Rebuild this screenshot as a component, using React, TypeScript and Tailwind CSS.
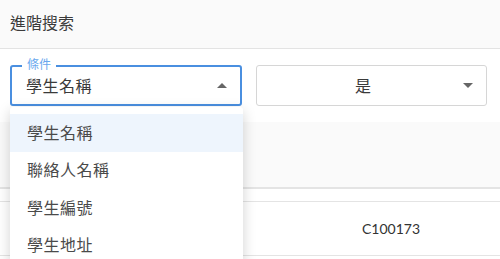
const menuItems = ["學生名稱", "聯絡人名稱", "學生編號", "學生地址"];

const font = "font-['Lato','Noto_Sans_CJK_TC',sans-serif]";

function Caret({ up = false }: { up?: boolean }) {
  return (
    <svg width="10" height="5" viewBox="0 0 10 5" className="shrink-0" aria-hidden="true">
      {up ? <path d="M0 5 L5 0 L10 5 Z" fill="#666" /> : <path d="M0 0 L5 5 L10 0 Z" fill="#666" />}
    </svg>
  );
}

export default function App() {
  return (
    <div className={`relative h-[259px] w-[500px] overflow-hidden bg-white ${font}`}>
      <div className="flex h-[49px] items-center border-b border-[#e3e3e3] bg-[#fafafa] px-[10px] pb-[2px] text-[16px] text-[#3a3a3a]">
        進階搜索
      </div>

      <div className="flex gap-[14px] px-[10px] pt-[16px]">
        <div className="relative flex h-[41px] w-[232px] items-center rounded-[3px] border-2 border-[#4a8fe0] pl-[14px] pr-[13px]">
          <span className="absolute -top-[9px] left-[10px] bg-white px-[5px] text-[12px] leading-[14px] text-[#6aa8ee]">
            條件
          </span>
          <span className="flex-1 text-[16px] tracking-[0.5px] text-[#3a3a3a]">學生名稱</span>
          <Caret up />
        </div>
        <div className="flex h-[41px] w-[231px] items-center rounded-[3px] border border-[#d6d6d6] pl-[14px] pr-[13px]">
          <span className="flex-1 pr-[8px] text-center text-[16px] text-[#3a3a3a]">是</span>
          <Caret />
        </div>
      </div>

      <div className="mt-[16px] h-[67px] border-b-2 border-[#e4e4e4] bg-[#fafafa]" />
      <div className="mt-[12px] flex h-[55px] items-center border-y border-[#e4e4e4]">
        <div className="w-[362px]" />
        <span className="text-[14px] text-[#333]">C100173</span>
      </div>

      <div className="absolute left-[10px] top-[107px] w-[233px] rounded-[3px] bg-white pt-[7px] shadow-[0_4px_14px_rgba(0,0,0,0.18)]">
        {menuItems.map((item, i) => (
          <div
            key={item}
            className={`flex h-[37.5px] items-center px-[17px] text-[16px] tracking-[0.5px] text-[#4a4a4a] ${i === 0 ? "bg-[#eef5fd]" : ""}`}
          >
            {item}
          </div>
        ))}
      </div>
    </div>
  );
}
